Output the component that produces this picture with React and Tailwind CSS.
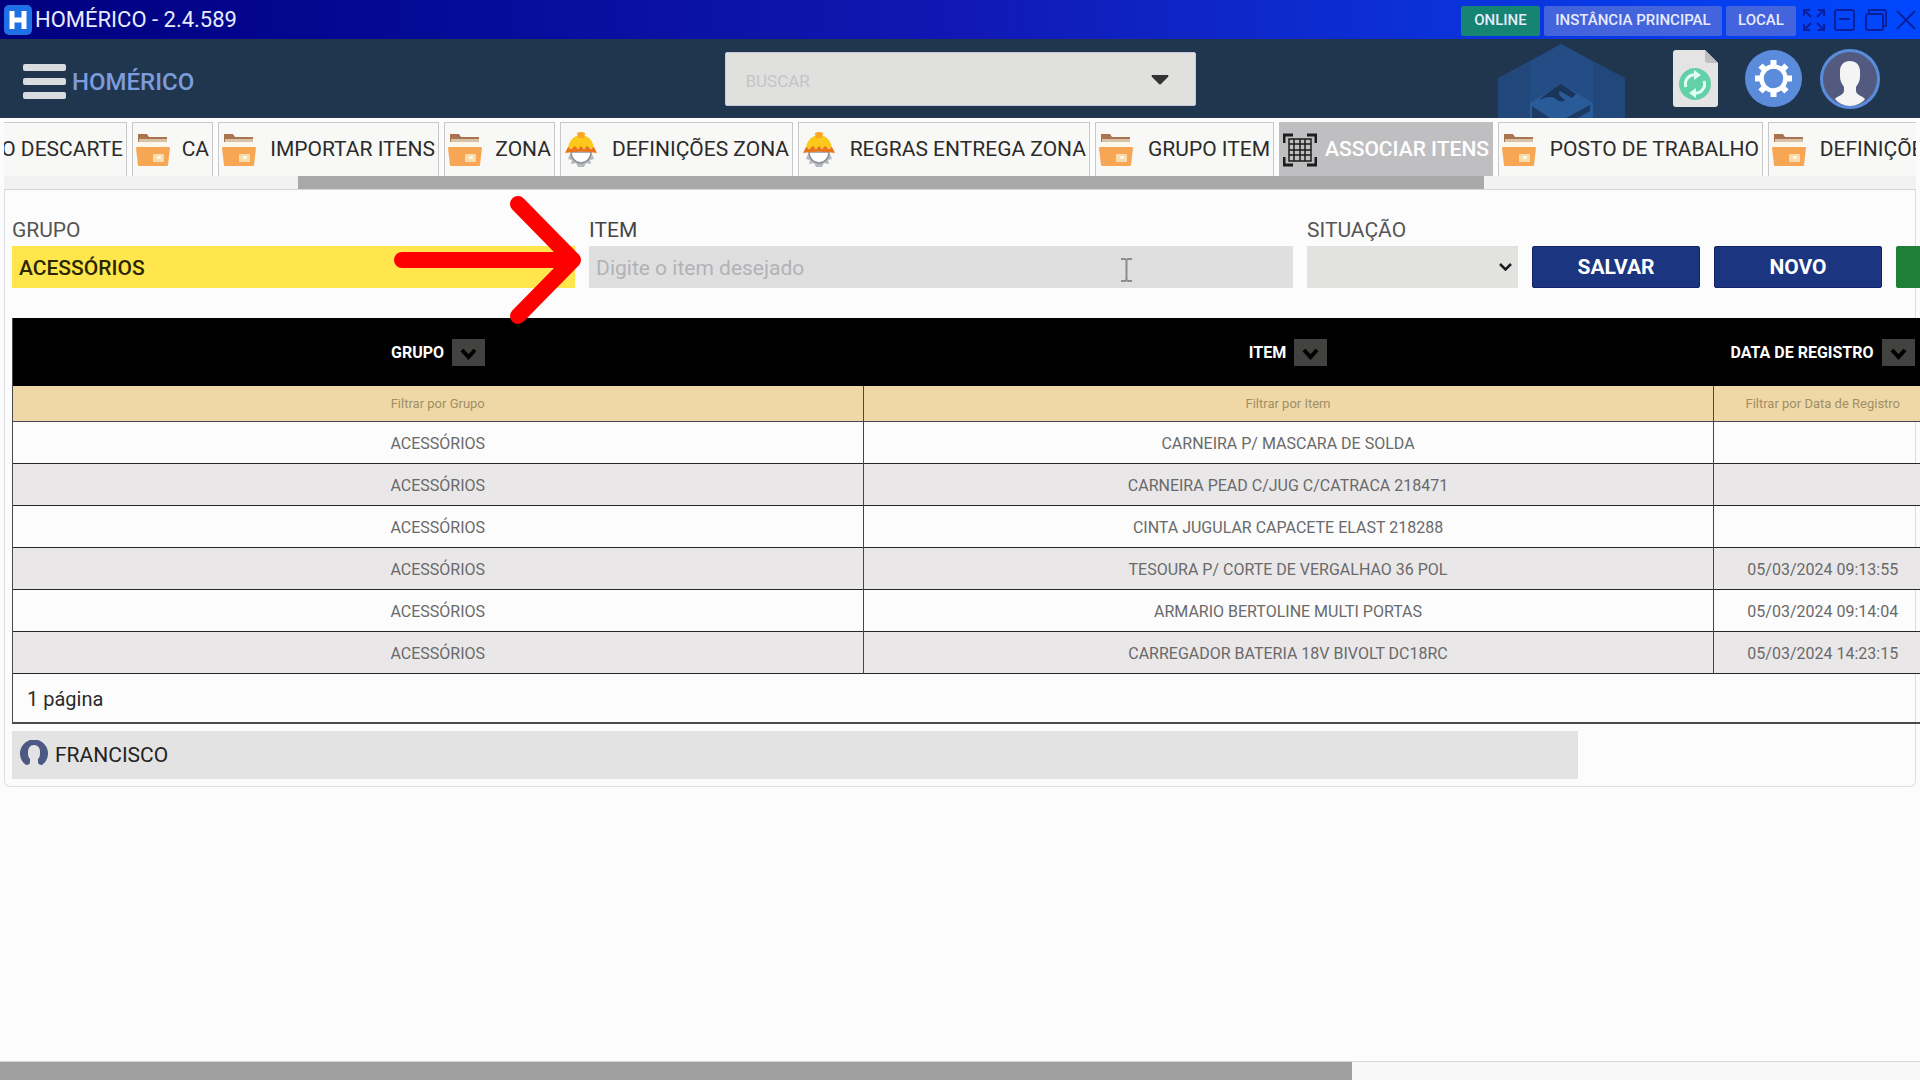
import { useState } from "react";

const TABS = [
  { label: "O DESCARTE", icon: null, width: "w-[123px]" },
  { label: "CA", icon: "folder", width: "w-[81px]" },
  { label: "IMPORTAR ITENS", icon: "folder", width: "w-[221px]" },
  { label: "ZONA", icon: "folder", width: "w-[111px]" },
  { label: "DEFINIÇÕES ZONA", icon: "helmet", width: "w-[233px]" },
  { label: "REGRAS ENTREGA ZONA", icon: "helmet", width: "w-[292px]" },
  { label: "GRUPO ITEM", icon: "folder", width: "w-[179px]" },
  { label: "ASSOCIAR ITENS", icon: "grid", width: "w-[214px]" },
  { label: "POSTO DE TRABALHO", icon: "folder", width: "w-[265px]" },
  { label: "DEFINIÇÕES", icon: "folder", width: "w-[172px]" },
];

const COLUMNS = [
  { title: "GRUPO", filter: "Filtrar por Grupo", width: "w-[850px]" },
  { title: "ITEM", filter: "Filtrar por Item", width: "w-[850px]" },
  { title: "DATA DE REGISTRO", filter: "Filtrar por Data de Registro", width: "w-[219px]" },
];

const ROWS = [
  ["ACESSÓRIOS", "CARNEIRA P/ MASCARA DE SOLDA", ""],
  ["ACESSÓRIOS", "CARNEIRA PEAD C/JUG C/CATRACA 218471", ""],
  ["ACESSÓRIOS", "CINTA JUGULAR CAPACETE ELAST 218288", ""],
  ["ACESSÓRIOS", "TESOURA P/ CORTE DE VERGALHAO 36 POL", "05/03/2024 09:13:55"],
  ["ACESSÓRIOS", "ARMARIO BERTOLINE MULTI PORTAS", "05/03/2024 09:14:04"],
  ["ACESSÓRIOS", "CARREGADOR BATERIA 18V BIVOLT DC18RC", "05/03/2024 14:23:15"],
];

function FolderIcon() {
  return (
    <svg className="h-[34px] w-[34px] shrink-0" viewBox="0 0 34 34">
      <path d="M2 1h9l2 3h18v14H2z" fill="#a9744f" />
      <path d="M3 6h28v8H3z" fill="#d9c3a8" />
      <path d="M2 9h30v7H2z" fill="#fdf6ea" />
      <path d="M0 15q0-1 1-1h32q1 0 1 1l-2 17q0 1-1 1H3q-1 0-1-1z" fill="#f7a654" />
      <rect x="17" y="21" width="11" height="8" rx="1" fill="#f6dcae" />
      <rect x="21" y="23" width="4" height="3" fill="#fff4dc" />
    </svg>
  );
}

function HelmetIcon() {
  return (
    <svg className="h-[36px] w-[34px] shrink-0" viewBox="0 0 34 36">
      <path
        d="M6 22l-2 5 4 1-1 4 5-1 2 4h6l2-4 5 1-1-4 4-1-2-5z"
        fill="#b4b9be"
      />
      <path d="M7 20a10 11 0 0 0 20 0z" fill="#fff" stroke="#8d9399" strokeWidth="1.500" />
      <path d="M4 16C5 9 9 5 13 4l1-3q3-1 6 0l1 3c4 1 8 5 9 12z" fill="#fcc81c" />
      <path d="M13 1q4-2 8 0l-1 5h-6z" fill="#f9a825" />
      <path d="M1 21l3-6 3 2 4-3 3 3 3-3 3 3 3-3 4 3 3-2 3 6q-16-3-32 0z" fill="#ec7418" />
    </svg>
  );
}

function GridIcon() {
  return (
    <svg className="h-[34px] w-[34px] shrink-0" viewBox="0 0 34 34" fill="none" stroke="#1c1c1c">
      <path d="M1 10V2h9M24 2h9v8M33 24v8h-9M10 32H1v-8" strokeWidth="3" />
      <path
        d="M6 6h22v22H6zM11 6v22M17 6v22M22 6v22M6 11h22M6 17h22M6 22h22"
        strokeWidth="1.500"
      />
    </svg>
  );
}

const TAB_ICONS = { folder: FolderIcon, helmet: HelmetIcon, grid: GridIcon };

function TitleBar() {
  return (
    <div className="flex h-[39px] items-center bg-linear-to-r from-[#00007f] via-[#1018b4] to-[#0048ff] pr-1 pl-1 text-[#e8ebff]">
      <svg className="h-[30px] w-[28px]" viewBox="0 0 28 30">
        <rect width="28" height="30" rx="5" fill="#1f6fe5" />
        <path d="M8 6v18M20 6v18M8 15h12" stroke="#fff" strokeWidth="5" />
      </svg>
      <span className="ml-[3px] text-[22px] leading-none">HOMÉRICO - 2.4.589</span>
      <div className="ml-auto flex items-center gap-1 pt-[2px] text-[15px] font-medium">
        <span className="flex h-[30px] w-[79px] items-center justify-center rounded-xs bg-[#158472]">ONLINE</span>
        <span className="flex h-[30px] w-[178px] items-center justify-center rounded-xs bg-[#4364dd]">
          INSTÂNCIA PRINCIPAL
        </span>
        <span className="flex h-[30px] w-[70px] items-center justify-center rounded-xs bg-[#4364dd]">LOCAL</span>
      </div>
      <div className="ml-[7px] flex items-center gap-[9px] text-[#0a1f9c]">
        <button aria-label="Tela cheia">
          <svg className="block h-[22px] w-[22px]" viewBox="0 0 22 22" fill="none" stroke="currentColor" strokeWidth="2">
            <path d="M1 7V1h6M1 1l7 7M15 1h6v6M21 1l-7 7M21 15v6h-6M21 21l-7-7M7 21H1v-6M1 21l7-7" />
          </svg>
        </button>
        <button aria-label="Minimizar">
          <svg className="block h-[22px] w-[22px]" viewBox="0 0 22 22" fill="none" stroke="currentColor" strokeWidth="2">
            <rect x="1" y="1" width="19" height="20" rx="2" />
            <path d="M5 10h11" />
          </svg>
        </button>
        <button aria-label="Restaurar">
          <svg className="block h-[22px] w-[22px]" viewBox="0 0 22 22" fill="none" stroke="currentColor" strokeWidth="2">
            <rect x="1" y="5" width="17" height="16" rx="2" />
            <path d="M4 4V1h15q2 0 2 2v14h-2" />
          </svg>
        </button>
        <button aria-label="Fechar">
          <svg className="block h-[20px] w-[20px]" viewBox="0 0 20 20" fill="none" stroke="currentColor" strokeWidth="2">
            <path d="M1 1l18 18M19 1L1 19" />
          </svg>
        </button>
      </div>
    </div>
  );
}

function Header() {
  return (
    <header className="grid h-[79px] grid-cols-[1fr_471px_1fr] items-center bg-[#20364f]">
      <div className="flex items-center pt-[6px] pl-[23px]">
        <button className="flex flex-col gap-[7px]" aria-label="Menu">
          <span className="h-[7px] w-[43px] rounded-xs bg-[#dadde0]" />
          <span className="h-[7px] w-[43px] rounded-xs bg-[#dadde0]" />
          <span className="h-[7px] w-[43px] rounded-xs bg-[#dadde0]" />
        </button>
        <span className="ml-[6px] text-[24px] font-medium text-[#7d9cdb]">HOMÉRICO</span>
      </div>
      <div className="flex h-[54px] items-center rounded-xs border border-[#c5c9dc] bg-[#e0e0de] pr-[26px] pl-[20px]">
        <input
          aria-label="Buscar"
          placeholder="BUSCAR"
          className="min-w-0 flex-1 bg-transparent pt-[6px] text-[17px] outline-none placeholder:text-[#c4c4c6]"
        />
        <button className="pt-[2px]" aria-label="Abrir busca">
          <svg className="block h-[10px] w-[18px]" viewBox="0 0 18 10">
            <path d="M1 0h16q1 1 0 2l-7 7q-1 1-2 0L1 2q-1-1 0-2z" fill="#333" />
          </svg>
        </button>
      </div>
      <div className="flex h-full items-center justify-end overflow-hidden pr-[40px]">
        <svg className="mr-[48px] h-[75px] w-[127px] self-end" viewBox="0 0 127 75">
          <path d="M63 1l64 34v40H0V35z" fill="#22477a" />
          <path d="M63 1l32 18v56H32V19z" fill="#254d85" />
          <path d="M63 41l32 19v15H32V60z" fill="#2a5b99" />
          <path d="M41 57q9-8 22-16l15 10-4 4-12-7q-4 3 5 9-3 3-8 0-5-6-18 0z" fill="#1b3459" />
          <path d="M34 63l18 12H34zM92 62v6l-12 7h-12z" fill="#1d3a63" />
        </svg>
        <button className="mr-[27px]" aria-label="Atualizar arquivo">
          <svg className="block h-[57px] w-[45px]" viewBox="0 0 45 57">
            <path d="M3 0h29l13 13v41q0 3-3 3H3q-3 0-3-3V3q0-3 3-3z" fill="#e4e4e4" />
            <path d="M32 0l13 13H35q-3 0-3-3z" fill="#bdbdc2" />
            <circle cx="22" cy="34" r="16" fill="#63d0aa" />
            <path d="M13 37a9 9 0 0 1 10-12M31 31a9 9 0 0 1-10 12" fill="none" stroke="#e2fff4" strokeWidth="3" />
            <path d="M21 20l7 5-7 5zM23 38l-7 5 7 5z" fill="#e2fff4" />
          </svg>
        </button>
        <button className="mr-[18px]" aria-label="Configurações">
          <svg className="block h-[57px] w-[57px]" viewBox="0 0 57 57">
            <circle cx="28.500" cy="28.500" r="28.500" fill="#5b8cdb" />
            <g stroke="#fff" strokeWidth="6">
              <path d="M28.500 10v37M10 28.500h37M15.500 15.500l26 26M41.500 15.500l-26 26" />
            </g>
            <circle cx="28.500" cy="28.500" r="12" fill="#5b8cdb" stroke="#fff" strokeWidth="4.500" />
          </svg>
        </button>
        <button aria-label="Usuário">
          <svg className="block h-[60px] w-[60px]" viewBox="0 0 60 60">
            <circle cx="30" cy="30" r="28.500" fill="#525a80" stroke="#5b8cdb" strokeWidth="3" />
            <path
              d="M30 12c-6 0-10 4-10 10v6c0 4 2 7 4 10v4c0 4-7 5-9 8 3 4 9 7 15 7s12-3 15-7c-2-3-9-4-9-8v-4c2-3 4-6 4-10v-6c0-6-4-10-10-10z"
              fill="#f4f4f4"
            />
          </svg>
        </button>
      </div>
    </header>
  );
}

function TabStrip({ active, onSelect }) {
  return (
    <nav className="mx-1 overflow-hidden pt-1">
      <div className="flex gap-[5px]">
        {TABS.map(({ label, icon, width }) => {
          const Icon = TAB_ICONS[icon];
          const selected = label === active;
          return (
            <button
              key={label}
              onClick={() => onSelect(label)}
              className={`flex h-[54px] shrink-0 items-center border border-b-0 px-[3px] text-[21px] whitespace-nowrap ${width} ${
                selected
                  ? "border-[#bfbfc2] bg-[#bfbfc2] font-medium text-white"
                  : "border-[#c9c9cb] bg-[#f8f8f6] text-[#2b2b2b]"
              } ${Icon ? "justify-between" : "justify-end border-l-0"}`}
            >
              {Icon && <Icon />}
              <span>{label}</span>
            </button>
          );
        })}
      </div>
      <div className="flex h-[14px] border-b border-[#d5d5da] bg-[#f2f2f2]">
        <div className="ml-[15.4%] w-[62%] bg-[#a9a9aa]" />
      </div>
    </nav>
  );
}

function FilterForm() {
  return (
    <form className="flex items-end gap-[14px] overflow-hidden pt-[24px] pl-[7px]" onSubmit={(e) => e.preventDefault()}>
      <div className="flex min-w-0 flex-[4] flex-col">
        <label htmlFor="grupo" className="text-[21px] leading-[32px] text-[#555]">GRUPO</label>
        <input
          id="grupo"
          defaultValue="ACESSÓRIOS"
          className="h-[42px] w-full bg-[#fee64c] px-[7px] pt-[2px] text-[21px] font-medium text-[#2a2600] outline-none"
        />
      </div>
      <div className="flex min-w-0 flex-[5] flex-col">
        <label htmlFor="item" className="text-[21px] leading-[32px] text-[#444]">ITEM</label>
        <input
          id="item"
          placeholder="Digite o item desejado"
          className="h-[42px] w-full bg-[#dfdfdf] px-[7px] pt-[2px] text-[21px] outline-none placeholder:text-[#b2b2b6]"
        />
      </div>
      <div className="flex w-[211px] shrink-0 flex-col">
        <label htmlFor="situacao" className="text-[21px] leading-[32px] text-[#555]">SITUAÇÃO</label>
        <div className="grid items-center bg-[#e2e2e0]">
          <select id="situacao" className="col-start-1 row-start-1 h-[42px] w-full appearance-none bg-transparent px-2 text-[21px] outline-none">
            <option></option>
          </select>
          <svg
            className="pointer-events-none col-start-1 row-start-1 mr-[6px] h-[8px] w-[13px] justify-self-end"
            viewBox="0 0 13 8"
            fill="none"
            stroke="#1c1c1c"
            strokeWidth="2.500"
          >
            <path d="M1 1l5.500 5.500L12 1" />
          </svg>
        </div>
      </div>
      <button className="h-[42px] w-[168px] shrink-0 rounded-xs border border-[#14246a] bg-[#1b3581] pt-[2px] text-[21px] font-bold text-white">
        SALVAR
      </button>
      <button className="h-[42px] w-[168px] shrink-0 rounded-xs border border-[#14246a] bg-[#1b3581] pt-[2px] text-[21px] font-bold text-white">
        NOVO
      </button>
      <button className="h-[42px] w-6 shrink-0 rounded-l-xs bg-[#1f7f37]" aria-label="Exportar" />
    </form>
  );
}

function ItemsTable() {
  return (
    <div className="mt-[30px] ml-[7px] w-screen border-b-2 border-l border-[#4a4a48]">
      <table className="w-full table-fixed border-collapse">
        <thead>
          <tr className="h-[68px] bg-black">
            {COLUMNS.map((col) => (
              <th key={col.title} className={`${col.width} p-0`}>
                <div className="flex items-center justify-center gap-[8px] text-[16px] font-bold whitespace-nowrap text-white">
                  <span className="pt-[2px]">{col.title}</span>
                  <button className="flex h-[27px] w-[33px] items-center justify-center bg-[#424240]" aria-label={`Ordenar ${col.title}`}>
                    <svg className="mt-1 h-[12px] w-[17px]" viewBox="0 0 17 12" fill="none" stroke="#000" strokeWidth="4">
                      <path d="M2 2l6.500 7L15 2" />
                    </svg>
                  </button>
                </div>
              </th>
            ))}
          </tr>
          <tr className="h-[35px] border-b border-[#44445a] bg-[#efd8a6]">
            {COLUMNS.map((col) => (
              <td key={col.title} className="border-l border-[#44445a] p-0 first:border-l-0">
                <input
                  aria-label={col.filter}
                  placeholder={col.filter}
                  className="block w-full bg-transparent text-center text-[13px] outline-none placeholder:text-[#a08f68]"
                />
              </td>
            ))}
          </tr>
        </thead>
        <tbody>
          {ROWS.map((row, i) => (
            <tr key={i} className="h-[42px] border-b border-[#26262c] even:bg-[#e9e7e8]">
              {row.map((cell, j) => (
                <td key={j} className="border-l border-[#44444c] p-0 pt-[3px] text-center text-[16px] text-[#6a6a6a] first:border-l-0">
                  {cell}
                </td>
              ))}
            </tr>
          ))}
        </tbody>
      </table>
      <div className="flex h-[48px] items-center pt-[2px] pl-[14px] text-[20px] text-[#2b2b2b]">1 página</div>
    </div>
  );
}

function UserBar() {
  return (
    <div className="mt-[7px] mb-[7px] ml-[7px] flex h-[48px] w-[82%] items-center gap-[7px] bg-[#e3e3e3] pl-[8px] text-[#222]">
      <svg className="mb-[3px] h-[26px] w-[28px]" viewBox="0 0 28 26">
        <path
          d="M6 25A14 14 0 1 1 22 25q-4 0-4-3v-3c2-2 2-4 2-7 0-4-2-7-6-7s-6 3-6 7c0 3 0 5 2 7v3q0 3-4 3z"
          fill="#4c5984"
        />
      </svg>
      <span className="pt-[2px] text-[21px]">FRANCISCO</span>
    </div>
  );
}

// Pointer and hint arrow float above the form.
function Annotations() {
  return (
    <>
      <svg className="pointer-events-none absolute top-[195px] left-[394px] h-[130px] w-[190px]" viewBox="0 0 190 130">
        <path
          d="M8 65h171M124 9l55 56-55 56"
          fill="none"
          stroke="#fe0000"
          strokeWidth="16"
          strokeLinecap="round"
          strokeLinejoin="round"
        />
      </svg>
      <svg className="pointer-events-none absolute top-[258px] left-[1121px] h-[24px] w-[11px]" viewBox="0 0 11 24">
        <path d="M0 1h4l1.500 1L7 1h4M5.500 2v20M0 23h4l1.500-1L7 23h4" fill="none" stroke="#8c8c90" strokeWidth="2" />
      </svg>
    </>
  );
}

export default function App() {
  const [active, setActive] = useState("ASSOCIAR ITENS");

  return (
    <div className="relative flex min-h-screen flex-col overflow-hidden bg-[#fcfcfc] font-['Roboto',sans-serif]">
      <TitleBar />
      <Header />
      <TabStrip active={active} onSelect={setActive} />
      <main className="mx-1 rounded-b-md border border-t-0 border-[#dcdce6]">
        <div className="-mr-[5px]">
          <FilterForm />
          <ItemsTable />
        </div>
        <UserBar />
      </main>
      <div className="mt-auto flex h-[19px] border-t border-[#d5d5dd] bg-[#f8f8f8]">
        <div className="w-[70.4%] bg-[#a0a0a0]" />
      </div>
      <Annotations />
    </div>
  );
}
